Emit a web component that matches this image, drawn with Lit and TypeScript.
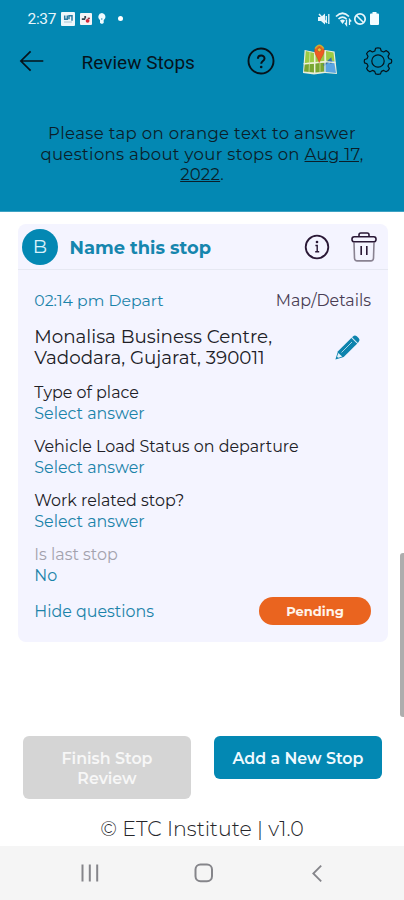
import { LitElement, html, css, svg } from "lit";
import { customElement, property } from "lit/decorators.js";

@customElement("app-icon")
class AppIcon extends LitElement {
  @property() name = "";
  static styles = css`
    :host { display: block; flex: none; }
    svg { display: block; width: 100%; height: 100%; overflow: visible; fill: none; stroke: currentColor; }
  `;
  private shapes: Record<string, { box: string; art: unknown }> = {
    photo: { box: "0 0 14 14", art: svg`<rect width="14" height="14" rx="1" fill="#eef7fb" stroke="none"/><path d="M3.7 3.5v3.7h2.6V3.5M8 7.2V3.7h3v5" stroke="#2a7ca3" stroke-width="1.5"/><path d="M3 10h8" stroke="#a9c4d2"/>` },
    puzzle: { box: "0 0 12 12", art: svg`<rect width="12" height="12" rx="1" fill="#f4f4f6" stroke="none"/><path d="M1.8 6.2h3.4M5.2 3v2.4" stroke="#36444f" stroke-width="1.8"/><circle cx="7.6" cy="7.8" r="1.9" fill="#d4293a" stroke="none"/><path d="M7.7 5.4h2.2" stroke="#8a3443" stroke-width="1.5"/>` },
    bulb: { box: "0 0 8 11", art: svg`<path d="M4 0a4 4 0 0 0-2 7.3V10l2 1 1.7-1V7.3A4 4 0 0 0 4 0z" fill="#eefaff" stroke="none"/><path d="M3.8 5v2" stroke="#54a6c4"/>` },
    mute: { box: "0 0 12 12", art: svg`<path d="M0 4h3l4-3.5v11L3 8H0z" fill="#e8f6fb" stroke="none"/><path d="M1 1l8 9" stroke="#e8f6fb" stroke-width="1.4"/><path d="M8.3 3v6M10.8 1v10" stroke="#e8f6fb" stroke-width="1.3"/>` },
    wifi: { box: "0 0 17 14", art: svg`<path d="M1 4.5Q7.5-2 14 4.5M3.5 7q4-4 8 0M5.8 9.2q1.7-1.7 3.4 0" stroke="#e8f6fb" stroke-width="1.7"/><path d="M7.5 12L5 8.5h5z" fill="#e8f6fb" stroke="none"/><path d="M11.5 7.5V13l-1.5-2M14.5 13V7.5l1.7 2" stroke="#e8f6fb" stroke-width="1.3"/>` },
    block: { box: "0 0 12 12", art: svg`<circle cx="6" cy="6" r="5.2" stroke="#e8f6fb" stroke-width="1.7"/><path d="M2.5 2.5l7 7" stroke="#e8f6fb" stroke-width="1.6"/>` },
    battery: { box: "0 0 9 13", art: svg`<path d="M2.5 0h4v1.4H8q1 0 1 1V12q0 1-1 1H1q-1 0-1-1V2.4q0-1 1-1h1.5z" fill="#f4fcff" stroke="none"/>` },
    back: { box: "0 0 24 20", art: svg`<path d="M23.3 10H1M10.6.4L.9 10l9.7 9.6" stroke-width="1.7"/>` },
    help: { box: "0 0 28 28", art: svg`<circle cx="14" cy="14" r="12.5" stroke-width="1.9"/><path d="M10.9 11.7c0-4.3 6.6-4.2 6.6-.3 0 2.6-3.3 2.7-3.3 5.4" stroke-width="2"/><circle cx="14.2" cy="20" r="1.3" fill="currentColor" stroke="none"/>` },
    map: { box: "0 0 36 31", art: svg`
      <path d="M2.6 5l9.5 2 11-2 9.5 1.5L35 29l-12-1-11 1.5L1 28z" fill="#e9eedb" stroke="none"/>
      <path d="M3.8 6l8.2 2 .2 9.2-9.4.8zM13.5 8l9-1.7.3 9.7-9.3 1zM24 6l7.5 1.4 1 9.2-8.3-.8z" fill="#9bcb45" stroke="none"/>
      <path d="M2.7 19.6l9.3-.8v8.8l-10-1.2zM13.4 18.6l9.5-1 .1 8.9-9.6 1.1z" fill="#78a632" stroke="none"/>
      <path d="M22 20l6-5.5 4.2 2.3L34 28l-12-1.2z" fill="#5ba5e2" stroke="none"/>
      <path d="M21.6 20.5l7-6.3.6 4.3" stroke="#3872aa" stroke-width="2"/>
      <path d="M1.5 18.8l11-1 11-1.2 10 1M12.5 7.5v21M23 5.5v22" stroke="#edf2d6" stroke-width="1.1"/>
      <path d="M8 6.5l-1 21M18 17v11" stroke="#dbe8b0" stroke-width=".7"/>
      <path d="M17.2 17.5C15.8 12 12.6 9.7 12.6 5.5a4.8 4.8 0 0 1 9.6 0c0 4.2-3.2 6.5-5 12z" fill="#ee5a24" stroke="#c94417" stroke-width=".5"/>
      <path d="M13.2 3.6Q17.4-3 21.6 3.6" stroke="#c8ac32" stroke-width="1.6"/><circle cx="17.4" cy="4.8" r="1.9" fill="#f6c62e" stroke="#9b6c20" stroke-width=".7"/>` },
    gear: { box: "0 0 28 28", art: svg`<path d="M11.6 1.3Q14 .3 16.4 1.3L17.2 4l2.4 1 2.6-1.4q2.4 1 3.2 3.2L24 9.4l1 2.3 2.4.8q.7 1.6 0 3.4l-2.4.9-1 2.3 1.4 2.4q-.9 2.4-3.3 3.3l-2.4-1.4-2.3 1-.9 2.5q-2.5.9-4.9 0l-.9-2.5-2.3-1-2.5 1.4q-2.4-1-3.3-3.3L4 19.1l-1-2.3-2.4-.9q-.7-1.7 0-3.4l2.4-.8 1-2.3-1.4-2.6Q3.500 4.500 5.900 3.600L8.400 5l2.400-1z" stroke-width="1.2" stroke-linejoin="round"/><circle cx="14" cy="14" r="6.200" stroke-width="1.200"/>` },
    info: { box: "0 0 26 26", art: svg`<circle cx="13" cy="13" r="11.3" stroke-width="1.8"/><path d="M11.4 11.5h1.8v6M11.2 17.7h4" stroke-width="1.4"/><circle cx="13" cy="8" r="1.3" fill="currentColor" stroke="none"/>` },
    trash: { box: "0 0 26 30", art: svg`<path d="M3 10.5l.5 15.700q.2 2.700 2.700 2.700h13.600q2.500 0 2.700-2.700l.5-15.700" stroke="#898291" stroke-width="1.600"/><rect x="1" y="4.800" width="24" height="5" rx="2.300" stroke-width="1.600"/><path d="M8 4.500V2.800q0-1.800 1.800-1.800h6.400q1.800 0 1.800 1.800v1.700M10.200 14v9M15.800 14v9" stroke-width="1.600"/>` },
    pencil: { box: "0 0 25 25", art: svg`<path d="M.4 24.6L3 16.3 16.6 2.7l5.700 5.700L8.700 22z" fill="currentColor" stroke="none"/><path d="M17.900 1.500q2-2 3.900-.2l2 2q1.700 1.800-.2 3.800l-.8.8-5.700-5.600z" fill="currentColor" stroke="none"/><path d="M6.500 17.500L17 7" stroke="#a8d3e4" stroke-width="1"/><path d="M2 22l1.300-4 3.900 3.600-3.600 1.200z" fill="#e6f2f9" stroke="none"/><path d="M16.500 2.700l5.700 5.700" stroke="#d8edf5" stroke-width=".8"/>` },
    recents: { box: "0 0 18 18", art: svg`<path d="M1.500.5v17M8.800.5v17M16.200.5v17" stroke-width="2"/>` },
    home: { box: "0 0 20 20", art: svg`<rect x="1.500" y="1.500" width="16.500" height="16.800" rx="5" stroke-width="2"/>` },
    prev: { box: "0 0 10 17", art: svg`<path d="M9.200.7L1.300 8.500l7.900 7.800" stroke-width="1.800"/>` },
  };
  render() {
    const s = this.shapes[this.name];
    return html`<svg viewBox=${s.box}>${s.art}</svg>`;
  }
}

@customElement("app-root")
class AppRoot extends LitElement {
  private questions = [
    { label: "Type of place", answer: "Select answer", cls: "type" },
    { label: "Vehicle Load Status on departure", answer: "Select answer", cls: "vehicle" },
    { label: "Work related stop?", answer: "Select answer", cls: "work" },
    { label: "Is last stop", answer: "No", cls: "last" },
  ];
  static styles = css`
    :host { display: flex; flex-direction: column; position: relative; height: 900px; width: 404px; overflow: hidden; background: #fff; color: #202026; font-family: Montserrat, Inter, sans-serif; font-size: 15.9px; white-space: nowrap; }
    * { box-sizing: border-box; }
    header { height: 212px; background: #0388b3; color: #0b1e29; border-bottom: 1px solid #3da2c3; }
    .status { height: 36px; padding: 1px 24px 0 27.500px; display: flex; align-items: center; color: #e8f6fb; }
    .clock { font: 15.500px Roboto, sans-serif; width: 33px; letter-spacing: -.3px; }
    .photo { width: 14px; height: 14px; margin-right: 5px; }
    .puzzle { width: 12px; height: 12px; margin-right: 6px; }
    .bulb { width: 8px; height: 11px; margin-right: 12px; }
    .dot { width: 5px; height: 5px; border-radius: 50%; background: #fff; }
    .space { flex: 1; }
    .mute { width: 12px; height: 12px; margin-right: 5px; }
    .wifi { width: 17px; height: 14px; margin-right: 2px; }
    .block { width: 12px; height: 12px; margin-right: 4px; }
    .battery { width: 9px; height: 13px; margin-right: 1px; }
    .bar { height: 50px; padding: 0 12.500px 0 20px; display: flex; align-items: center; color: #06131b; }
    .back { width: 24px; height: 20px; }
    h1 { margin: 3px 0 0 37.500px; font: 400 19px/24px Roboto, sans-serif; letter-spacing: .02px; flex: 1; }
    .help { width: 28px; height: 28px; margin-right: 27px; }
    .map { width: 36px; height: 31px; margin: 0 25.500px 2px 0; }
    .gear { width: 28px; height: 28px; }
    .notice { margin: 37px 0 0; text-align: center; font-size: 16.500px; line-height: 20.600px; }
    .notice div { height: 20.600px; }
    .n1 { letter-spacing: .37px; }
    .n2 { letter-spacing: .34px; }
    .n3 { letter-spacing: .2px; }
    .card { margin: 12px 16px 0 18px; height: 418px; border-radius: 8px; background: #f4f4ff; }
    .card-head { height: 46px; display: flex; align-items: center; padding: 0 11px 0 4px; border-bottom: 1px solid #e6e8f2; color: #2a1836; }
    .badge { width: 36px; height: 36px; border-radius: 50%; background: #0388b3; color: #d9f1fa; display: grid; place-items: center; font-size: 19px; }
    h2 { flex: 1; margin: 2px 0 0 11.500px; font-size: 17.850px; font-weight: 700; color: #1686ae; }
    .info { width: 26px; height: 26px; margin-right: 21px; }
    .trash { width: 26px; height: 30px; }
    .body { padding: 19.500px 17px 0 16.300px; }
    .row { display: flex; justify-content: space-between; align-items: center; line-height: 22px; }
    .blue, .answer { color: #1b83a9; }
    .depart { font-size: 15.700px; }
    .details { color: #493d54; }
    .address { margin-top: 14px; font-size: 18.300px; line-height: 21.500px; }
    .pencil { width: 25px; height: 25px; color: #0d83ad; margin: 0 11px 0 0; }
    .q { margin-top: 11px; line-height: 21.500px; }
    .address + .q { margin-top: 13px; }
    .last .label { color: #a3a2ad; }
    .foot { margin-top: 10.500px; height: 28px; }
    .hide { padding-top: 1px; }
    .pill { width: 112px; height: 28px; border-radius: 14px; background: #ea641f; color: #fff4ec; display: grid; place-items: center; font-size: 13px; font-weight: 700; }
    .actions { margin-top: 94px; padding: 0 22px 0 23px; height: 64px; display: flex; justify-content: space-between; align-items: flex-start; }
    button { border: 0; margin: 0; padding: 2px 0 0; width: 168px; border-radius: 6px; font: 600 15.850px/19.500px Montserrat, Inter, sans-serif; color: #f0faff; background: #0388b3; height: 43px; }
    .finish { height: 63px; background: #d5d5d5; color: #f7f7f7; }
    .copyright { text-align: center; margin-top: 17px; font-size: 20.500px; line-height: 24px; font-weight: 300; color: #26262a; }
    nav { margin-top: auto; height: 54px; background: #f5f5f5; color: #85858a; display: flex; align-items: center; padding: 0 82px 0 81px; justify-content: space-between; }
    .recents { width: 18px; height: 18px; }
    .home { width: 20px; height: 20px; margin-right: 4px; }
    .prev { width: 10px; height: 17px; }
    .thumb { position: absolute; right: 0; top: 553px; width: 4px; height: 164px; background: #adadad; border-radius: 3px 0 0 3px; }
  `;
  render() {
    const icon = (n: string) => html`<app-icon class=${n} name=${n}></app-icon>`;
    return html`
      <header>
        <div class="status"><span class="clock">2:37</span>${icon("photo")}${icon("puzzle")}${icon("bulb")}<span class="dot"></span><span class="space"></span>${icon("mute")}${icon("wifi")}${icon("block")}${icon("battery")}</div>
        <div class="bar">${icon("back")}<h1>Review Stops</h1>${icon("help")}${icon("map")}${icon("gear")}</div>
        <div class="notice"><div><span class="n1">Please tap on orange text to answer</span></div><div><span class="n2">questions about your stops on <u>Aug 17,</u></span></div><div><span class="n3"><u>2022</u>.</span></div></div>
      </header>
      <section class="card">
        <div class="card-head"><span class="badge">B</span><h2><span>Name this stop</span></h2>${icon("info")}${icon("trash")}</div>
        <div class="body">
          <div class="row"><span class="blue depart">02:14 pm Depart</span><span class="details">Map/Details</span></div>
          <div class="row address"><div><div class="a1">Monalisa Business Centre,</div><div class="a2">Vadodara, Gujarat, 390011</div></div>${icon("pencil")}</div>
          ${this.questions.map((q) => html`<div class="q ${q.cls}"><div class="label">${q.label}</div><div class="answer">${q.answer}</div></div>`)}
          <div class="row foot"><span class="blue hide">Hide questions</span><span class="pill">Pending</span></div>
        </div>
      </section>
      <div class="actions"><button class="finish">Finish Stop<br />Review</button><button class="add">Add a New Stop</button></div>
      <div class="copyright">© ETC Institute | v1.0</div>
      <nav>${icon("recents")}${icon("home")}${icon("prev")}</nav>
      <div class="thumb"></div>`;
  }
}
